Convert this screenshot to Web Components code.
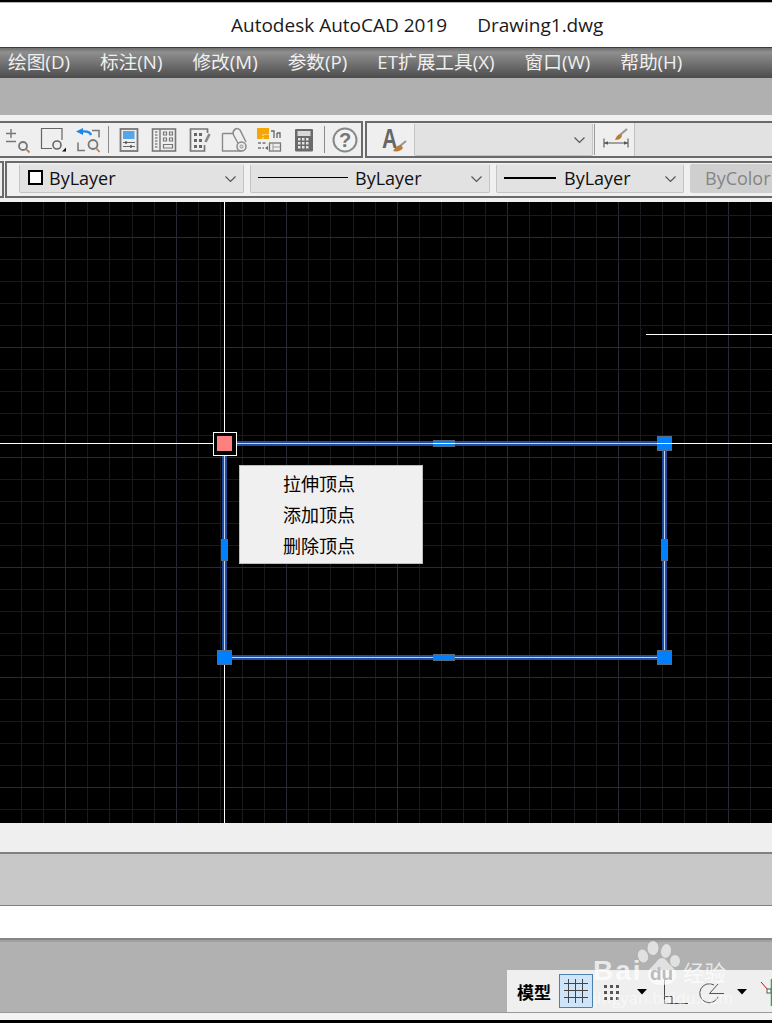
<!DOCTYPE html>
<html lang="zh">
<head>
<meta charset="utf-8">
<title>Autodesk AutoCAD 2019</title>
<style>
  html, body { margin: 0; height: 1023px; overflow: hidden; background: #000; }
  body { font-family: "Open Sans", "Noto Sans CJK SC", sans-serif; display: flex; flex-direction: column; position: relative; }
</style>
</head>
<body>
  <cad-title-bar app="Autodesk AutoCAD 2019" file="Drawing1.dwg"></cad-title-bar>
  <cad-menu-bar></cad-menu-bar>
  <cad-ribbon-gap></cad-ribbon-gap>
  <cad-toolbar-one></cad-toolbar-one>
  <cad-toolbar-two></cad-toolbar-two>
  <cad-canvas>
    <cad-context-menu>
      <span>拉伸顶点</span>
      <span>添加顶点</span>
      <span>删除顶点</span>
    </cad-context-menu>
  </cad-canvas>
  <cad-bottom-bands></cad-bottom-bands>
  <cad-watermark></cad-watermark>

<script>
const MENU = ["绘图(D)", "标注(N)", "修改(M)", "参数(P)", "ET扩展工具(X)", "窗口(W)", "帮助(H)"];
const LATIN = `"Open Sans", "Noto Sans CJK SC", sans-serif`;
const G = "#777";
const BROWN = "#b08a5e";

// one svg body per toolbar button, in a 35x32 box
const ICONS = {
  zoomPlus: `
    <path d="M6 9.500h10M11 5v9M6 17.500h10" stroke="${G}" stroke-width="1.400" fill="none"/>
    <circle cx="23" cy="22" r="4" fill="#eee" stroke="${G}" stroke-width="1.800"/>
    <path d="M26 25l3.500 3.500" stroke="${BROWN}" stroke-width="1.800"/>`,
  zoomWindow: `
    <path d="M17 24.500H6.500V4.500h20.500V16" stroke="#666" stroke-width="1.200" fill="none"/>
    <circle cx="22" cy="21" r="4" fill="#eee" stroke="#666" stroke-width="1.600"/>
    <path d="M27 27.500h4v-4z" fill="#111"/>`,
  zoomPrev: `
    <path d="M21 11c-1-3-4-4-9-3.500" stroke="#1e88e5" stroke-width="2.400" fill="none"/>
    <path d="M6 7.500l7-3.500v7z" fill="#1e88e5"/>
    <path d="M22 6.500h7v7M15 26.500H8v-8" stroke="${G}" stroke-width="1.500" fill="none"/>
    <circle cx="23" cy="20.500" r="4.500" fill="#eee" stroke="${G}" stroke-width="1.800"/>
    <path d="M26 24l3.500 4" stroke="${BROWN}" stroke-width="1.800"/>`,
  properties: `
    <rect x="9.500" y="5" width="17" height="22" fill="#eee" stroke="${G}" stroke-width="1.800"/>
    <rect x="12" y="7" width="11.500" height="8" fill="#57a5e6"/>
    <path d="M12 18.500h12M12 22.500h12" stroke="#666" stroke-width="1.100"/>
    <path d="M15 17v3M20 21v3" stroke="#555" stroke-width="1.400"/>`,
  design: `
    <rect x="6.500" y="5" width="23" height="22" fill="#eee" stroke="${G}" stroke-width="1.600"/>
    <path d="M14 5v22" stroke="${G}" stroke-width="1.400"/>
    <path d="M9 8h2.500M9 11h2.500M9 14h2.500M9 17h2.500M9 20h2.500M9 23h2.500" stroke="#888" stroke-width="1.300"/>
    <path d="M17.500 8h3v3h-3zM23.500 8h3v3h-3zM17.500 14h3v3h-3zM23.500 14h3v3h-3zM17.500 20.500h9v3.500h-9z" fill="none" stroke="#777" stroke-width="1.200"/>`,
  palette: `
    <path d="M26.500 9V5h-17v22h14v-6" fill="#eee" stroke="${G}" stroke-width="1.700"/>
    <path d="M13 9h3v3h-3zM18 9h3v3h-3zM13 15h3v3h-3zM18 15h3v3h-3zM13 21h3v3h-3zM18 21h3v3h-3z" fill="#666"/>
    <path d="M28.500 10l-4 8" stroke="#888" stroke-width="2.600"/>`,
  sheetSet: `
    <path d="M6.500 9.500h11M6.500 9.500v17.500h19" fill="none" stroke="#8a8a8a" stroke-width="1.400"/>
    <path d="M17 10c0-5 4-7 7-4l6 12" fill="none" stroke="#8a8a8a" stroke-width="1.500"/>
    <path d="M17 10l7 13" fill="none" stroke="#8a8a8a" stroke-width="1.400"/>
    <circle cx="25.500" cy="22.500" r="4.500" fill="#eee" stroke="#8a8a8a" stroke-width="1.500"/>
    <circle cx="25.500" cy="22.500" r="1.500" fill="none" stroke="#8a8a8a" stroke-width="1"/>`,
  markup: `
    <rect x="6" y="4" width="12" height="11" fill="#f7a600"/>
    <path d="M12 15v-4.500h6" stroke="#f6e2b0" stroke-width="1.200" fill="none" stroke-dasharray="2 1"/>
    <path d="M20 7h3v7M26 9v5M26 9h3v5" stroke="#666" stroke-width="1.300" fill="none"/>
    <path d="M7 19h8M7 24h6" stroke="#777" stroke-width="1.400" stroke-dasharray="3 1.500"/>
    <path d="M14 24l3-2v4z" fill="#666"/>
    <rect x="18.500" y="19" width="11" height="8" fill="#eee" stroke="#777" stroke-width="1.300"/>
    <path d="M22 19v8M22 23h7" stroke="#999" stroke-width="1"/>`,
  calc: `
    <rect x="9" y="5" width="18" height="22.500" rx="1" fill="#6a6a6a"/>
    <rect x="11.500" y="7" width="13" height="5" fill="#d8d8d8"/>
    <path d="M12 14h2.500v2.500H12zM16 14h2.500v2.500H16zM20 14h2.500v2.500H20zM12 18h2.500v2.500H12zM16 18h2.500v2.500H16zM20 18h2.500v2.500H20zM12 22h2.500v2.500H12zM16 22h2.500v2.500H16zM20 22h2.500v2.500H20z" fill="#e4e4e4"/>`,
  help: `
    <circle cx="18" cy="16" r="11.500" fill="#f2f2f2" stroke="#888" stroke-width="2"/>
    <text x="18" y="23" text-anchor="middle" font-size="20" font-weight="700" fill="#777" font-family="Liberation Sans, sans-serif">?</text>`
};

class CadTitleBar extends HTMLElement {
  constructor() {
    super();
    this.attachShadow({ mode: "open" });
  }

  connectedCallback() {
    this.shadowRoot.innerHTML = /* html */`
    <style>
      :host { display: flex; height: 45px; flex: none; margin-top: 2px; background: #fff; border-top: 1px solid #b4b4b4; box-sizing: border-box; padding: 0 0 0 231px; align-items: center; color: #1a1a1a; font: 19px ${LATIN}; white-space: nowrap; }
      span + span { margin-left: 30px; }
    </style>
    <span>${this.getAttribute("app")}</span><span>${this.getAttribute("file")}</span>`;
  }
}

class CadMenuBar extends HTMLElement {
  constructor() {
    super();
    this.attachShadow({ mode: "open" });
  }

  connectedCallback() {
    const items = MENU.map(m => `<span>${m}</span>`).join("");
    this.shadowRoot.innerHTML = /* html */`
    <style>
      :host { display: flex; flex: none; height: 31px; box-sizing: border-box; gap: 30px; padding: 0 0 5px 8px; align-items: center; white-space: nowrap;
        border-top: 1px solid #3c3c3c; color: #f0f0f0; font: 18.700px ${LATIN};
        background: linear-gradient(#6f6f6f, #8f8f8f 14%, #4c4c4c 100%); }
    </style>
    ${items}`;
  }
}

class CadRibbonGap extends HTMLElement {
  constructor() {
    super();
    this.attachShadow({ mode: "open" });
  }

  connectedCallback() {
    this.shadowRoot.innerHTML = /* html */`
    <style>
      :host { display: block; flex: none; height: 37px; background: #b0b0b0; }
    </style>`;
  }
}

class CadTool extends HTMLElement {
  constructor() {
    super();
    this.attachShadow({ mode: "open" });
  }

  connectedCallback() {
    this.shadowRoot.innerHTML = /* html */`
    <style>
      :host { display: block; flex: none; width: 35px; height: 32px; }
      svg { display: block; }
    </style>
    <svg width="35" height="32" viewBox="0 0 35 32">${ICONS[this.getAttribute("icon")]}</svg>`;
  }
}

class CadCombo extends HTMLElement {
  constructor() {
    super();
    this.attachShadow({ mode: "open" });
  }

  connectedCallback() {
    this.shadowRoot.innerHTML = /* html */`
    <style>
      :host { display: flex; flex: none; box-sizing: border-box; align-items: center; background: #e2e2e2; border: 1px solid #c4c4c4; border-top-color: #e8e8e8; border-radius: 2px; position: relative; padding-left: 7px; padding-bottom: 2px; color: #111; font: 18px ${LATIN}; white-space: nowrap; }
      svg { position: absolute; right: 6px; top: 50%; margin-top: -4px; }
      ::slotted(*) { flex: none; }
    </style>
    <slot></slot>
    <svg width="13" height="8" viewBox="0 0 13 8"><path d="M1.500 1.500l5 5 5-5" fill="none" stroke="#555" stroke-width="1.200"/></svg>`;
  }
}

class CadToolbarOne extends HTMLElement {
  constructor() {
    super();
    this.attachShadow({ mode: "open" });
  }

  connectedCallback() {
    const tools = names => names.map(n => `<cad-tool icon="${n}"></cad-tool>`).join("");
    this.shadowRoot.innerHTML = /* html */`
    <style>
      :host { display: flex; flex: none; height: 46px; box-sizing: border-box; padding-top: 6px; gap: 2px; background: #f0f0f0; }
      .panel { display: flex; box-sizing: border-box; height: 37px; border-top: 2px solid #6a6a6a; border-bottom: 2px solid #6a6a6a; background: #efefef; align-items: center; }
      .tools { flex: none; width: 363px; border-right: 2px solid #6a6a6a; }
      .sep { flex: none; width: 6px; height: 27px; display: flex; justify-content: center; }
      .sep::before { content: ""; width: 1px; background: #8a8a8a; }
      .style { flex: 1; border-left: 2px solid #6a6a6a; }
      .style svg { flex: none; display: block; }
      .box { height: 33px; background: #e2e2e2; border-left: 1px solid #c0c0c0; box-sizing: border-box; }
      .grip { flex: none; width: 1px; height: 31px; background: #9a9a9a; margin: 0 2px 0 1px; }
      cad-combo { width: 179px; height: 33px; }
    </style>
    <div class="panel tools">
      ${tools(["zoomPlus", "zoomWindow", "zoomPrev"])}
      <div class="sep"></div>
      ${tools(["properties", "design", "palette", "sheetSet", "markup", "calc"])}
      <div class="sep"></div>
      ${tools(["help"])}
    </div>
    <div class="panel style">
      <svg width="47" height="32" viewBox="0 0 47 32">
        <text transform="translate(15 24) scale(.75 1)" font-size="28" font-weight="700" fill="#666" font-family="Liberation Sans, sans-serif">A</text>
        <path d="M39 17l-6 5" stroke="#999" stroke-width="2.200"/>
        <path d="M34 21c-3 0-6 2-8 6 4 1 8 0 10-3z" fill="#bb7a35"/>
      </svg>
      <cad-combo></cad-combo>
      <div class="grip"></div>
      <svg width="37" height="32" viewBox="0 0 37 32">
        <path d="M7 14.500v9M31 14.500v9M7 19h24" stroke="#555" stroke-width="1.100" fill="none"/>
        <path d="M7 19l4-1.800v3.600zM31 19l-4-1.800v3.600z" fill="#555"/>
        <path d="M23 11l7-6" stroke="#999" stroke-width="2.200"/>
        <path d="M24 10c-3 0-5 3-6 6 3 0 6-1 7-4z" fill="#bb7a35"/>
      </svg>
      <div class="box" style="flex:1"></div>
    </div>`;
  }
}

class CadToolbarTwo extends HTMLElement {
  constructor() {
    super();
    this.attachShadow({ mode: "open" });
  }

  connectedCallback() {
    this.shadowRoot.innerHTML = /* html */`
    <style>
      :host { display: flex; flex: none; height: 41px; box-sizing: border-box; padding-bottom: 4px; gap: 1px; background: #f0f0f0; }
      .panel { display: flex; box-sizing: border-box; height: 37px; border-top: 2px solid #6a6a6a; border-bottom: 2px solid #6a6a6a; align-items: center; background: #f0f0f0; }
      .stub { width: 4px; border-right: 2px solid #6a6a6a; }
      .main { flex: 1; border-left: 2px solid #6a6a6a; padding-left: 12px; gap: 6px; overflow: hidden; min-width: 0; }
      cad-combo { height: 29px; margin-top: -2px; }
      .color { width: 225px; padding-left: 8px; }
      .swatch { width: 11px; height: 11px; border: 2px solid #000; background: #fff; margin-right: 6px; }
      .type { width: 240px; }
      .weight { width: 188px; }
      .rule { background: #000; height: 1px; margin-right: 7px; }
      .plot { flex: 1; height: 29px; margin-top: -2px; padding-bottom: 2px; box-sizing: border-box; background: #cfcfcf; color: #858585; font: 18px ${LATIN}; display: flex; align-items: center; padding-left: 15px; border-radius: 2px 0 0 2px; white-space: nowrap; }
    </style>
    <div class="panel stub"></div>
    <div class="panel main">
      <cad-combo class="color"><div class="swatch"></div><span>ByLayer</span></cad-combo>
      <cad-combo class="type"><div class="rule" style="width:90px"></div><span>ByLayer</span></cad-combo>
      <cad-combo class="weight"><div class="rule" style="width:52px;height:2px;margin-right:8px"></div><span>ByLayer</span></cad-combo>
      <div class="plot">ByColor</div>
    </div>`;
  }
}

class CadCanvas extends HTMLElement {
  constructor() {
    super();
    this.attachShadow({ mode: "open" });
  }

  gridLines() {
    const lines = [];
    for (let i = 0; i < 36; i++) {
      const x = Math.round(21 + i * 22.1) + 0.5;
      const major = (i - 2) % 5 === 0;
      lines.push(`<path d="M${x} 0V621" stroke="${major ? "#2a2a37" : "#191920"}"/>`);
    }
    for (let i = 0; i < 30; i++) {
      const y = Math.round(13 + i * 22) + 0.5;
      const major = (i - 1) % 5 === 0;
      lines.push(`<path d="M0 ${y}H772" stroke="${major ? "#2a2a37" : "#191920"}"/>`);
    }
    return lines.join("");
  }

  handle(x, y, w, h, fill = "#0080ff") {
    return `<rect x="${x + 0.5}" y="${y + 0.5}" width="${w - 1}" height="${h - 1}" fill="${fill}" stroke="#5a6a80"/>`;
  }

  connectedCallback() {
    // page y minus 202, the top of the canvas
    this.shadowRoot.innerHTML = /* html */`
    <style>
      :host { display: block; flex: none; height: 621px; background: #000; position: relative; overflow: hidden; }
      svg { display: block; position: absolute; inset: 0; }
      ::slotted(cad-context-menu) { position: absolute; left: 239px; top: 263px; }
    </style>
    <svg width="772" height="621" viewBox="0 0 772 621" shape-rendering="crispEdges">
      ${this.gridLines()}
      <path d="M224.500 0V621M0 241.500H772M646 132.500H772" stroke="#fff"/>
      <rect x="224.500" y="241.500" width="440" height="214" fill="none" stroke="#1f4c9c" stroke-width="5"/>
      <rect x="224.500" y="241.500" width="440" height="214" fill="none" stroke="#c4d4f0" stroke-width="1.500"/>
      ${this.handle(433, 238, 22, 7)}
      ${this.handle(433, 452, 22, 7)}
      ${this.handle(221, 337, 7, 22)}
      ${this.handle(661, 337, 7, 22)}
      ${this.handle(657, 234, 15, 15)}
      ${this.handle(217, 448, 15, 15)}
      ${this.handle(657, 448, 15, 15)}
      <path d="M433 241.500H455M657 241.500H772" stroke="#fff"/>
      <rect x="213.500" y="230.500" width="23" height="23" fill="#000" stroke="#fff"/>
      <rect x="217" y="234" width="15" height="15" fill="#ff8080"/>
    </svg>
    <slot></slot>`;
  }
}

class CadContextMenu extends HTMLElement {
  constructor() {
    super();
    this.attachShadow({ mode: "open" });
  }

  connectedCallback() {
    this.shadowRoot.innerHTML = /* html */`
    <style>
      :host { display: flex; flex-direction: column; box-sizing: border-box; width: 184px; height: 99px; padding: 2px 0 3px 43px; background: #f0f0f0; border: 1px solid #bdbdbd; color: #000; font: 18px "Noto Sans CJK SC", sans-serif; }
      ::slotted(span) { height: 31px; line-height: 31px; }
    </style>
    <slot></slot>`;
  }
}

class CadStatusBar extends HTMLElement {
  constructor() {
    super();
    this.attachShadow({ mode: "open" });
  }

  connectedCallback() {
    this.shadowRoot.innerHTML = /* html */`
    <style>
      :host { display: flex; width: 265px; height: 42px; box-sizing: border-box; padding-left: 10px; align-items: center; background: #efefef; color: #000; }
      b { font: 700 17px "Noto Sans CJK SC", sans-serif; width: 42px; flex: none; }
      .on { flex: none; width: 34px; height: 34px; box-sizing: border-box; background: #cde4f9; border: 1px solid #4d80aa; }
      svg { flex: none; display: block; }
    </style>
    <b>模型</b>
    <div class="on">
      <svg width="32" height="32" viewBox="0 0 32 32"><path d="M4 8.500h24M4 15.500h24M4 22.500h24M8.500 4v24M15.500 4v24M22.500 4v24" stroke="#444" stroke-width="1" fill="none"/></svg>
    </div>
    <svg width="179" height="42" viewBox="593 969 179 42">
      <path d="M604 984h3v3h-3zM610 984h3v3h-3zM616 984h3v3h-3zM604 990h3v3h-3zM610 990h3v3h-3zM616 990h3v3h-3zM604 996h3v3h-3zM610 996h3v3h-3zM616 996h3v3h-3z" fill="#555"/>
      <path d="M637 988h10l-5 5.500z" fill="#000"/>
      <path d="M664.500 978v24.500H688M664.500 995.500h7.500v7" stroke="#444" stroke-width="1" fill="none"/>
      <path d="M714 984a9.500 9.500 0 1 0 4 12" stroke="#555" stroke-width="1" fill="none"/>
      <path d="M709.500 992.500H724M709.500 992.500L718 983" stroke="#555" stroke-width="1" fill="none"/>
      <path d="M737 988h10l-5 5.500z" fill="#000"/>
      <path d="M761 981l7 8" stroke="#e00000" stroke-width="1"/>
      <rect x="767" y="988" width="4" height="4" fill="#fff" stroke="#555"/>
      <path d="M771.500 978v27" stroke="#14b050" stroke-width="1.500"/>
    </svg>`;
  }
}

class CadBottomBands extends HTMLElement {
  constructor() {
    super();
    this.attachShadow({ mode: "open" });
  }

  connectedCallback() {
    this.shadowRoot.innerHTML = /* html */`
    <style>
      :host { display: flex; flex-direction: column; flex: 1; min-height: 0; }
      div { flex: none; box-sizing: border-box; }
      .command { height: 29px; background: #efefef; }
      .history { height: 53px; background: #c8c8c8; border-top: 2px solid #808080; }
      .input { height: 33px; background: #fff; border-top: 1px solid #808080; }
      .tabs { height: 75px; background: #b1b1b1; border-top: 2px solid #868686; border-bottom: 1px solid #999; display: flex; justify-content: flex-end; align-items: flex-end; box-shadow: inset 0 2px 0 #a0a0a0; }
      .strip { height: 7px; background: #f3f3f3; }
      .end { flex: 1; background: #000; }
    </style>
    <div class="command"></div>
    <div class="history"></div>
    <div class="input"></div>
    <div class="tabs"><cad-status-bar></cad-status-bar></div>
    <div class="strip"></div>
    <div class="end"></div>`;
  }
}

class CadWatermark extends HTMLElement {
  constructor() {
    super();
    this.attachShadow({ mode: "open" });
  }

  connectedCallback() {
    this.shadowRoot.innerHTML = /* html */`
    <style>
      :host { position: absolute; left: 590px; top: 938px; width: 182px; height: 70px; color: rgba(255,255,255,.72); pointer-events: none; }
      svg { position: absolute; left: 0; top: 0; }
      span { position: absolute; white-space: nowrap; }
      .bai { left: 3px; top: 20px; font: 700 28px/26px "Liberation Sans", sans-serif; letter-spacing: 2px; }
      .du { left: 60px; top: 26px; font: 700 19px/20px "Liberation Sans", sans-serif; color: rgba(180,180,180,.9); }
      .jy { left: 93px; top: 22px; font: 21.500px/24px "Noto Sans CJK SC", sans-serif; }
      .url { left: 3px; top: 51px; font: 16px/19px "Open Sans", sans-serif; letter-spacing: .25px; color: rgba(255,255,255,.55); }
    </style>
    <svg width="182" height="70" viewBox="0 0 182 70" fill="rgba(255,255,255,.62)">
      <ellipse cx="53" cy="18" rx="5" ry="6.500" transform="rotate(-18 53 18)"/>
      <ellipse cx="63" cy="10" rx="5.500" ry="7"/>
      <ellipse cx="76" cy="13" rx="5" ry="7" transform="rotate(12 76 13)"/>
      <ellipse cx="85" cy="23" rx="5" ry="6"/>
      <path d="M58 36c0-6 6-8 9-13 3-4 7-4 10 0 3 5 9 7 9 14 0 6-5 10-14 10-9 0-14-4-14-11z"/>
    </svg>
    <span class="bai">Bai</span><span class="du">du</span><span class="jy">经验</span>
    <span class="url">jingyan.baidu.com</span>`;
  }
}

customElements.define("cad-title-bar", CadTitleBar);
customElements.define("cad-menu-bar", CadMenuBar);
customElements.define("cad-ribbon-gap", CadRibbonGap);
customElements.define("cad-tool", CadTool);
customElements.define("cad-combo", CadCombo);
customElements.define("cad-toolbar-one", CadToolbarOne);
customElements.define("cad-toolbar-two", CadToolbarTwo);
customElements.define("cad-canvas", CadCanvas);
customElements.define("cad-context-menu", CadContextMenu);
customElements.define("cad-status-bar", CadStatusBar);
customElements.define("cad-bottom-bands", CadBottomBands);
customElements.define("cad-watermark", CadWatermark);
</script>
</body>
</html>
